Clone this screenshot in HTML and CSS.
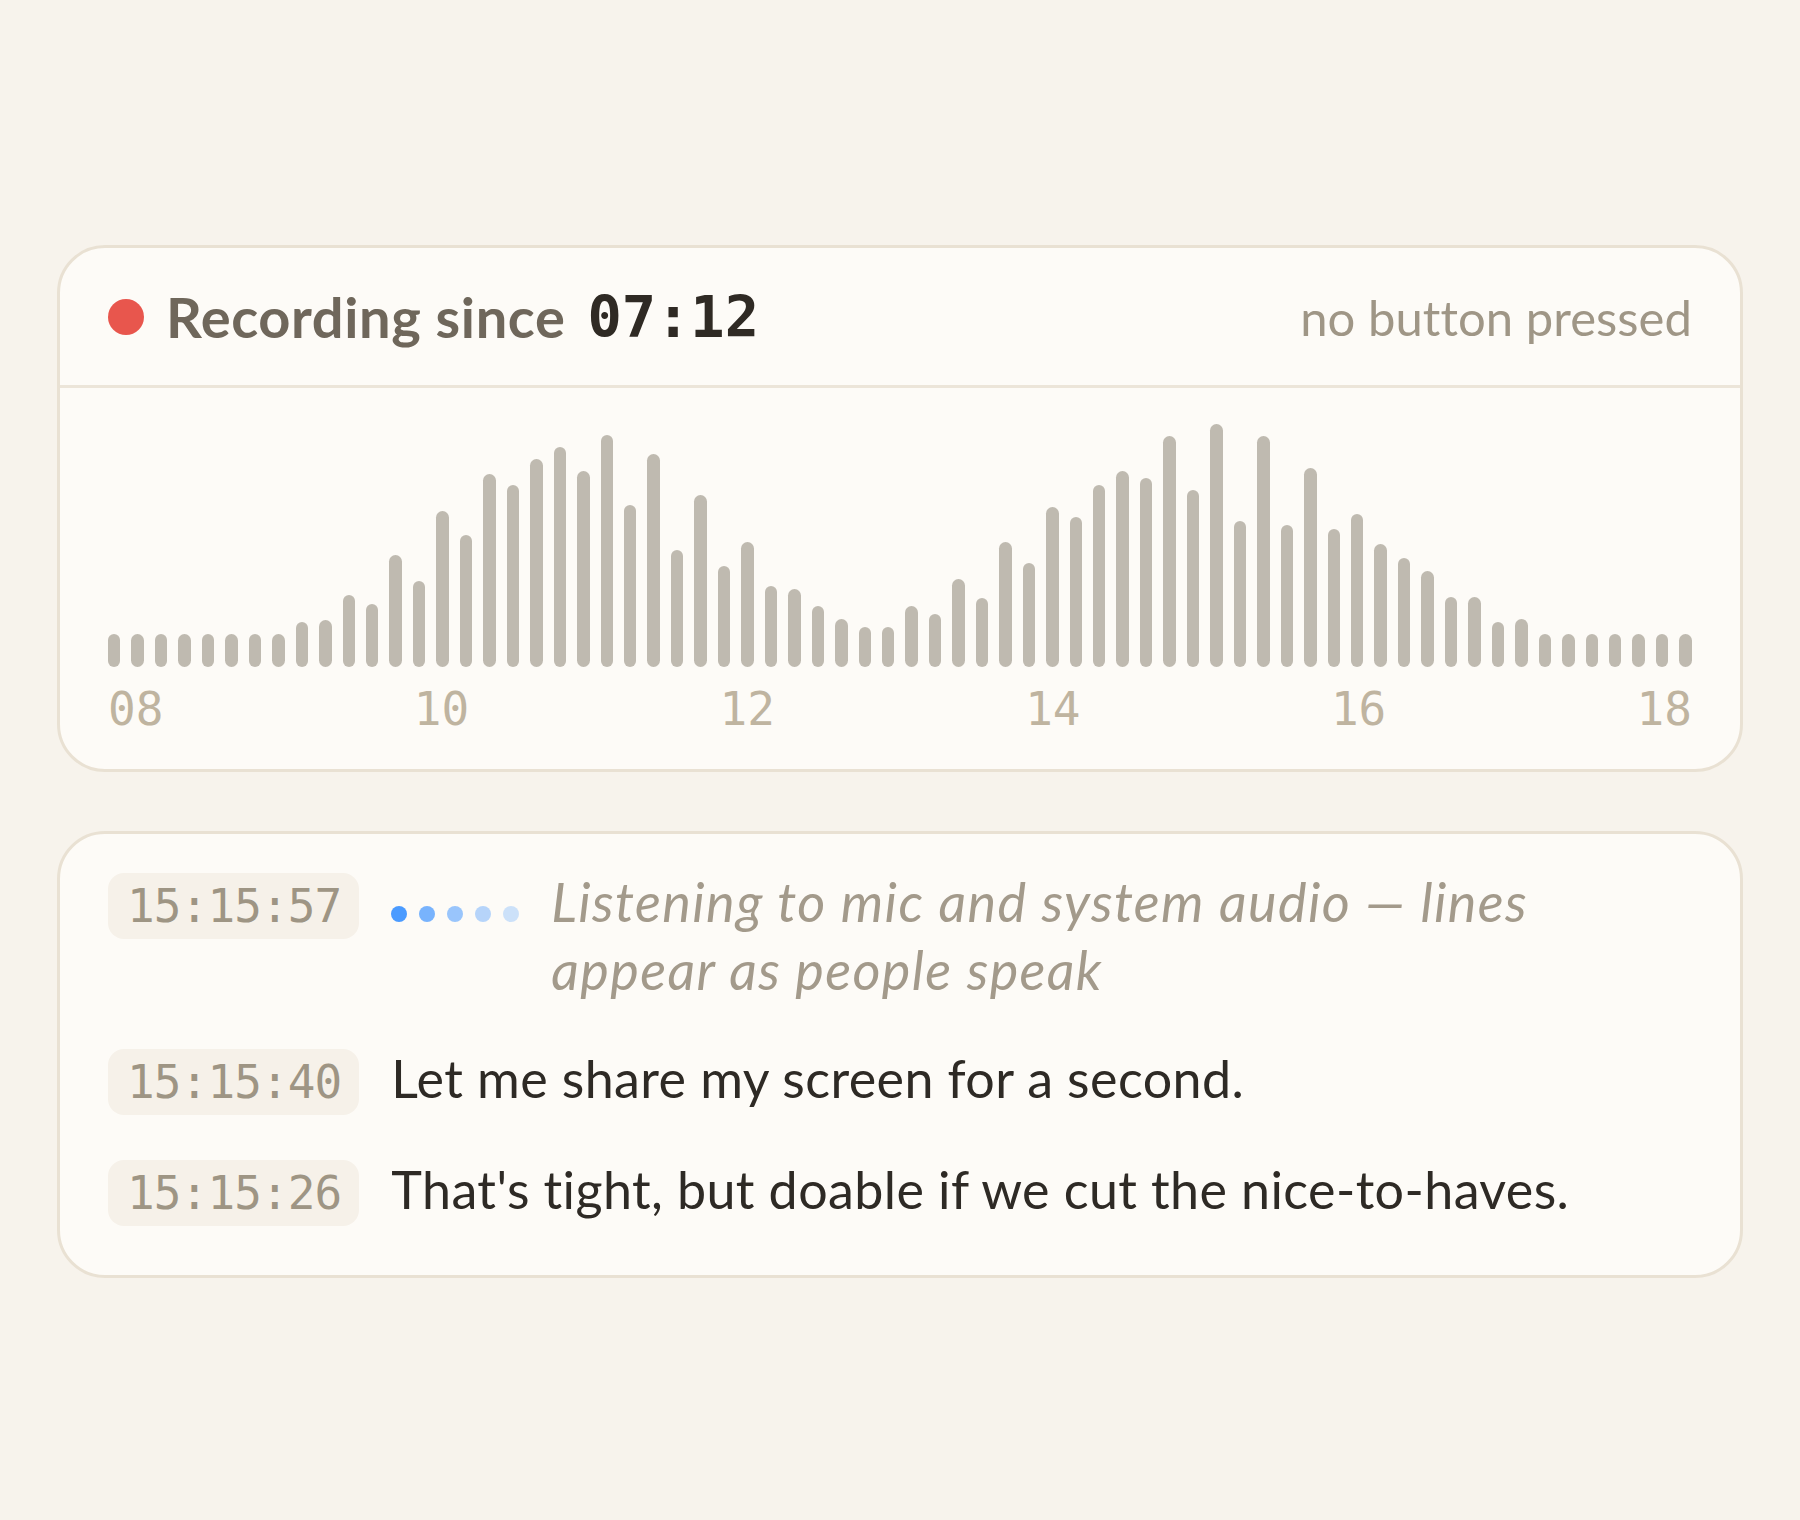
FILE: index.html
```html
<!DOCTYPE html>
<html lang="en">
<head>
<meta charset="utf-8">
<title>Recording</title>
<link rel="stylesheet" href="styles.css">
</head>
<body>
<main class="page">
  <section class="card recorder">
    <header class="header">
      <div class="rec">
        <span class="rec-dot"></span>
        <span class="rec-label">Recording since</span>
        <span class="clock">07:12</span>
      </div>
      <span class="status">no button pressed</span>
    </header>
    <div class="chart">
      <div class="bars">
        <span class="bar" style="height:33px"></span>
        <span class="bar" style="height:33px"></span>
        <span class="bar" style="height:33px"></span>
        <span class="bar" style="height:33px"></span>
        <span class="bar" style="height:33px"></span>
        <span class="bar" style="height:33px"></span>
        <span class="bar" style="height:33px"></span>
        <span class="bar" style="height:33px"></span>
        <span class="bar" style="height:45px"></span>
        <span class="bar" style="height:47px"></span>
        <span class="bar" style="height:72px"></span>
        <span class="bar" style="height:63px"></span>
        <span class="bar" style="height:112px"></span>
        <span class="bar" style="height:86px"></span>
        <span class="bar" style="height:156px"></span>
        <span class="bar" style="height:132px"></span>
        <span class="bar" style="height:193px"></span>
        <span class="bar" style="height:182px"></span>
        <span class="bar" style="height:208px"></span>
        <span class="bar" style="height:220px"></span>
        <span class="bar" style="height:196px"></span>
        <span class="bar" style="height:232px"></span>
        <span class="bar" style="height:162px"></span>
        <span class="bar" style="height:213px"></span>
        <span class="bar" style="height:117px"></span>
        <span class="bar" style="height:172px"></span>
        <span class="bar" style="height:101px"></span>
        <span class="bar" style="height:125px"></span>
        <span class="bar" style="height:81px"></span>
        <span class="bar" style="height:78px"></span>
        <span class="bar" style="height:61px"></span>
        <span class="bar" style="height:48px"></span>
        <span class="bar" style="height:40px"></span>
        <span class="bar" style="height:40px"></span>
        <span class="bar" style="height:61px"></span>
        <span class="bar" style="height:53px"></span>
        <span class="bar" style="height:88px"></span>
        <span class="bar" style="height:69px"></span>
        <span class="bar" style="height:125px"></span>
        <span class="bar" style="height:104px"></span>
        <span class="bar" style="height:160px"></span>
        <span class="bar" style="height:150px"></span>
        <span class="bar" style="height:182px"></span>
        <span class="bar" style="height:196px"></span>
        <span class="bar" style="height:189px"></span>
        <span class="bar" style="height:231px"></span>
        <span class="bar" style="height:177px"></span>
        <span class="bar" style="height:243px"></span>
        <span class="bar" style="height:146px"></span>
        <span class="bar" style="height:231px"></span>
        <span class="bar" style="height:142px"></span>
        <span class="bar" style="height:199px"></span>
        <span class="bar" style="height:138px"></span>
        <span class="bar" style="height:153px"></span>
        <span class="bar" style="height:123px"></span>
        <span class="bar" style="height:109px"></span>
        <span class="bar" style="height:96px"></span>
        <span class="bar" style="height:70px"></span>
        <span class="bar" style="height:70px"></span>
        <span class="bar" style="height:45px"></span>
        <span class="bar" style="height:48px"></span>
        <span class="bar" style="height:33px"></span>
        <span class="bar" style="height:33px"></span>
        <span class="bar" style="height:33px"></span>
        <span class="bar" style="height:33px"></span>
        <span class="bar" style="height:33px"></span>
        <span class="bar" style="height:33px"></span>
        <span class="bar" style="height:33px"></span>
      </div>
      <div class="axis">
        <span>08</span><span>10</span><span>12</span><span>14</span><span>16</span><span>18</span>
      </div>
    </div>
  </section>

  <section class="card transcript">
    <div class="row">
      <span class="time">15:15:57</span>
      <span class="dots"><i></i><i></i><i></i><i></i><i></i></span>
      <p class="line pending">Listening to mic and system audio — lines appear as people speak</p>
    </div>
    <div class="row">
      <span class="time">15:15:40</span>
      <p class="line">Let me share my screen for a second.</p>
    </div>
    <div class="row">
      <span class="time">15:15:26</span>
      <p class="line">That's tight, but doable if we cut the nice-to-haves.</p>
    </div>
  </section>
</main>
</body>
</html>
```

FILE: styles.css
```css
* { box-sizing: border-box; }

html, body {
  margin: 0;
  padding: 0;
}

body {
  width: 1800px;
  height: 1520px;
  background: #f7f3ec;
  font-family: Lato, "Noto Sans", sans-serif;
}

.page {
  display: flex;
  flex-direction: column;
  gap: 59px;
  padding: 245px 57px 0;
}

.card {
  background: #fdfbf7;
  border: 3px solid #e9e1d3;
  border-radius: 48px;
  overflow: hidden;
}

/* header */
.header {
  display: flex;
  align-items: center;
  justify-content: space-between;
  height: 140px;
  padding: 0 48px;
  border-bottom: 3px solid #ece5d9;
}

.rec {
  display: flex;
  align-items: center;
  gap: 22px;
}

.rec-dot {
  width: 36px;
  height: 36px;
  border-radius: 50%;
  background: #e8564d;
}

.rec-label {
  font-size: 56px;
  font-weight: 700;
  letter-spacing: 0.6px;
  color: #6f675b;
}

.clock {
  font-family: "DejaVu Sans Mono", monospace;
  font-size: 57px;
  font-weight: 700;
  color: #2f2a24;
}

.status {
  font-size: 49px;
  letter-spacing: 0.05px;
  color: #9f9686;
}

/* chart */
.chart {
  padding: 35px 48px 33px;
}

.bars {
  display: flex;
  align-items: flex-end;
  gap: 11px;
  height: 244px;
}

.bar {
  flex: 1;
  background: #bfbab0;
  border-radius: 7px;
}

.axis {
  display: flex;
  justify-content: space-between;
  margin-top: 15px;
  font-family: "DejaVu Sans Mono", monospace;
  font-size: 46px;
  line-height: 54px;
  color: #bfb4a0;
}

/* transcript */
.transcript {
  display: flex;
  flex-direction: column;
  gap: 40px;
  padding: 34px 48px 49px;
}

.row {
  display: flex;
  align-items: baseline;
  gap: 32px;
}

.time {
  flex: none;
  padding: 6px 18px 6px 19px;
  border-radius: 16px;
  background: #f6f1e9;
  font-family: "DejaVu Sans Mono", monospace;
  font-size: 46px;
  line-height: 54px;
  letter-spacing: -0.9px;
  color: #9e9584;
}

.dots {
  display: flex;
  flex: none;
  gap: 12px;
}

.dots i {
  width: 16px;
  height: 16px;
  border-radius: 50%;
  background: #4b9bff;
}

.dots i:nth-child(2) { opacity: 0.75; }
.dots i:nth-child(3) { opacity: 0.56; }
.dots i:nth-child(4) { opacity: 0.4; }
.dots i:nth-child(5) { opacity: 0.27; }

.line {
  margin: 0;
  font-size: 52px;
  line-height: 68px;
  letter-spacing: 0.4px;
  color: #2e2a25;
}

.pending {
  max-width: 1000px;
  font-size: 54px;
  letter-spacing: 1.4px;
  font-style: italic;
  color: #a39a8b;
}
```
